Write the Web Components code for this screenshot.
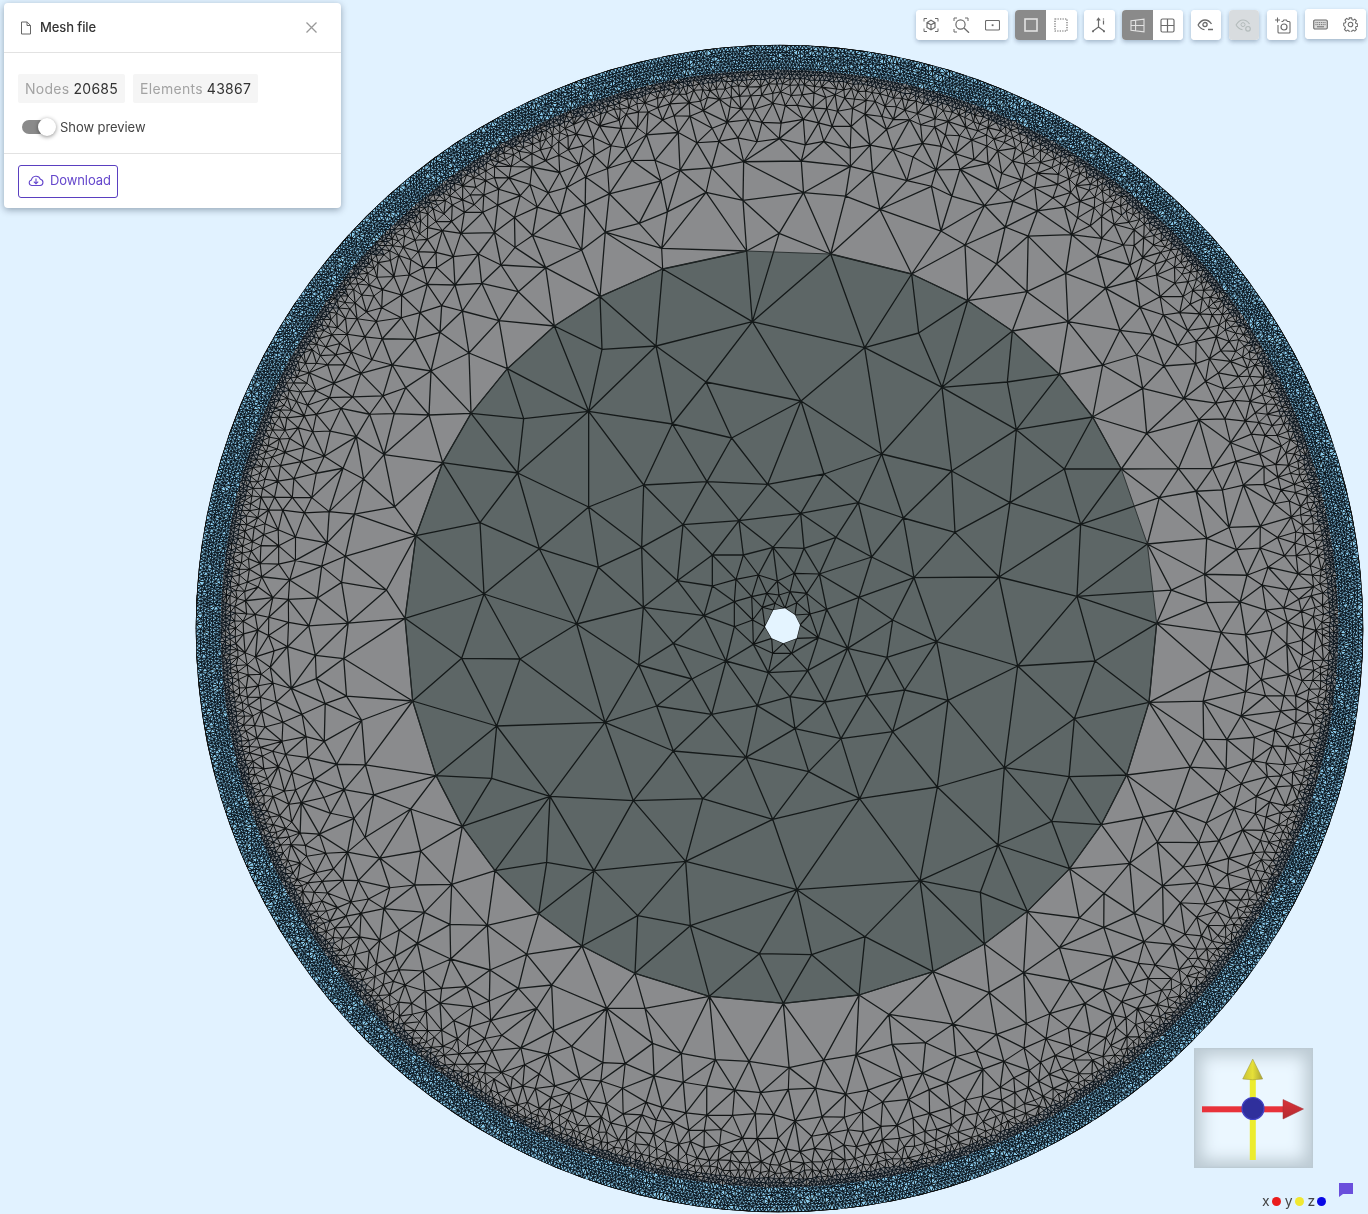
<!DOCTYPE html>
<html lang="en"><head><meta charset="utf-8"><title>Mesh file</title>
<style>
html,body{margin:0;padding:0;background:#e1f2ff;font-family:Inter,"Liberation Sans",sans-serif}
app-stage{display:block}
</style></head>
<body>
<app-stage>
  <mesh-view></mesh-view>
  <file-panel slot="over"></file-panel>
  <tool-bar slot="over"></tool-bar>
  <axis-gizmo slot="over"></axis-gizmo>
  <axis-legend slot="over"></axis-legend>
</app-stage>
<script>
const def=(n,html)=>{customElements.define(n,class extends HTMLElement{
  constructor(){super();this.attachShadow({mode:'open'}).innerHTML=typeof html==='function'?html(this):html;}
})};

def('app-stage',`<style>:host{display:block;position:relative;width:1368px;height:1214px;overflow:hidden;background:#e1f2ff}
</style><slot></slot><slot name="over"></slot>`);

/* ---------- mesh ---------- */
const Q=(ox,oy,a)=>a.map(([x,y])=>[ox+x/3,oy+y/3]);
const nearHole=Q(700,550,[[37,15],[130,15],[37,108],[108,88],[175,75],[232,93],[283,70],[358,72],[103,155],[155,140],[200,130],[237,135],[270,125],[320,130],[380,178],[187,172],[225,160],[258,170],[290,158],[330,192],[12,197],[158,210],[103,230],[355,263],[160,283],[443,295],[218,310],[275,310],[78,333],[205,368],[323,362],[270,440],[477,142]]);
const holePoly=Q(700,550,[[220,180],[255,175],[285,195],[300,225],[290,265],[250,280],[215,265],[195,230]]);
const boundary=[
 ...Q(400,245,[[1040,18],[788,72],[600,155],[463,243],[322,371],[213,505],[128,653],[48,872],[15,1120]]),
 ...Q(780,245,[[152,27],[395,87],[563,167],[697,258],[838,388],[938,516],[1024,672],[1102,897],[1130,1135]]),
 ...Q(400,625,[[38,228],[108,452],[187,604],[285,737],[416,866],[546,963],[705,1045],[928,1114],[1150,1135]]),
 ...Q(780,625,[[1107,232],[1040,450],[964,599],[869,731],[742,859],[613,957],[459,1040],[237,1110]])
];
const inner=[
 ...Q(400,245,[[1057,230],[768,303],[606,313],[918,411],[566,499],[371,521],[817,537],[995,579],[353,684],[731,720],[921,710],[1103,718],[566,786],[240,833],[849,839],[1017,827],[418,911],[725,907],[1119,907],[595,967],[937,929],[1032,931],[832,1007],[937,1025],[1010,1000],[1075,990],[252,1047],[730,1087],[913,1111],[530,1137],[1003,1070],[1055,1055],[1100,1045],[1133,1008],[1057,1123],[1003,1145]]),
 ...Q(780,245,[[254,308],[416,264],[486,427],[682,411],[63,468],[709,554],[305,627],[515,678],[853,672],[132,687],[690,773],[235,773],[62,805],[370,819],[902,838],[525,862],[168,877],[72,910],[275,936],[402,998],[657,996],[44,984],[117,987],[891,1054],[238,1058],[30,1043],[80,1050],[142,1093],[92,1108],[338,1125]]),
 ...Q(400,625,[[185,100],[360,102],[530,0],[716,120],[820,55],[978,107],[876,162],[1062,58],[1105,145],[1072,242],[770,243],[935,268],[615,292],[290,303],[820,378],[1038,397],[275,460],[450,514],[700,527],[908,521],[1118,583],[440,712],[582,737],[857,709],[713,872],[871,902],[1078,986]]),
 ...Q(780,625,[[115,38],[203,72],[321,97],[470,50],[713,123],[945,108],[38,85],[84,137],[374,195],[260,211],[135,231],[33,212],[504,226],[883,281],[45,311],[338,320],[183,341],[673,428],[867,455],[86,440],[472,486],[239,521],[815,589],[654,660],[601,802],[420,767],[51,794],[255,935],[95,989]])
];
const outerNear=[
 ...Q(400,245,[[437,68],[303,60],[235,27],[160,35],[108,22],[55,20],[245,115],[165,120],[82,118],[355,140],[187,198],[125,182],[60,203],[297,227],[120,262],[45,283],[207,324],[93,378],[17,428],[87,510],[5,150],[28,90],[70,68],[110,68],[545,15],[785,10]]),
 ...Q(780,245,[[555,0],[650,57],[857,85],[741,140],[952,33],[977,130],[1068,105],[1088,38],[1130,90],[864,230],[1020,256],[1080,187],[1117,268],[968,360],[1070,330],[1088,430],[1100,565],[1140,155],[1150,210],[1050,60],[1030,0]]),
 ...Q(400,625,[[32,552],[62,678],[155,778],[44,780],[73,862],[150,898],[262,901],[52,955],[152,1002],[380,988],[270,1035],[70,1038],[455,1080],[355,1090],[200,1085],[125,1090],[15,1080],[268,1128],[35,1135],[410,1150],[75,1098],[620,1150],[735,1150]]),
 ...Q(780,625,[[1090,576],[1049,715],[972,805],[1063,865],[898,879],[838,968],[1000,995],[1092,950],[1150,900],[731,1043],[870,1068],[628,1103],[970,1095],[1050,1075],[1105,1060],[1125,1020],[1075,1015],[915,1135],[1025,1130],[1095,1110],[1145,1095]])
];
const CX=779.5,CY=628.5,R=583.8,TAU=Math.PI*2;
const table=[[376,50],[410,42],[450,31],[480,24],[510,17],[530,12],[545,7],[552,4],[556,3.6],[585,3.6]];
const H=r=>{for(let i=1;i<table.length;i++){if(r<=table[i][0]){const a=table[i-1],b=table[i];return a[1]+(b[1]-a[1])*(r-a[0])/(b[0]-a[0]);}}return 3.6};
function buildMesh(){
  let s=1234567;const rnd=()=>{s|=0;s=s+0x6D2B79F5|0;let t=Math.imul(s^s>>>15,1|s);t=t+Math.imul(t^t>>>7,61|t)^t;return((t^t>>>14)>>>0)/4294967296};
  const pts=[],grid=new Map(),CS=64;
  const key=(x,y)=>Math.floor(x/CS)*100000+Math.floor(y/CS);
  const near=(x,y,d)=>{const gx=Math.floor(x/CS),gy=Math.floor(y/CS);
    for(let i=gx-1;i<=gx+1;i++)for(let j=gy-1;j<=gy+1;j++){const c=grid.get(i*100000+j);if(!c)continue;
      for(const p of c){const dx=p[0]-x,dy=p[1]-y;if(dx*dx+dy*dy<d*d)return true}}return false};
  const add=(x,y)=>{const p=[x,y];pts.push(p);const k=key(x,y);(grid.get(k)||grid.set(k,[]).get(k)).push(p)};
  holePoly.forEach(p=>add(p[0],p[1]));
  nearHole.forEach(p=>{if(!near(p[0],p[1],6))add(p[0],p[1])});
  boundary.forEach(p=>{if(!near(p[0],p[1],6))add(p[0],p[1])});
  inner.forEach(p=>{if(!near(p[0],p[1],6))add(p[0],p[1])});
  outerNear.forEach(p=>{if(!near(p[0],p[1],5))add(p[0],p[1])});
  let r=396;
  while(r<R-2.5){const h=H(r),n=Math.round(TAU*r/h),ph=rnd()*7;
    for(let i=0;i<n;i++){const a=ph+i/n*TAU;const j=r>556?0.3:0.42;
      const rr=r+(rnd()-.5)*h*j,aa=a+(rnd()-.5)*h*j/r;
      const x=CX+rr*Math.cos(aa),y=CY+rr*Math.sin(aa);
      if(rr<R-1.5&&!near(x,y,h*.74))add(x,y)}
    r+=h*.86}
  for(let i=0,n=1000;i<n;i++){const a=(i+(rnd()-.5)*.5)/n*TAU,rr=R-rnd()*.6;add(CX+rr*Math.cos(a),CY+rr*Math.sin(a))}
  return pts;
}
function delaunay(P){
  const n=P.length;const pts=P.concat([[-1e5,-1e5],[3e5,-1e5],[600,3e5]]);
  const order=[...Array(n).keys()].sort((a,b)=>P[a][0]-P[b][0]);
  const circ=(a,b,c)=>{const A=pts[a],B=pts[b],C=pts[c];
    const bx=B[0]-A[0],by=B[1]-A[1],cx=C[0]-A[0],cy=C[1]-A[1];
    const d=2*(bx*cy-by*cx)||1e-9,bb=bx*bx+by*by,cc=cx*cx+cy*cy;
    const ux=(cy*bb-by*cc)/d,uy=(bx*cc-cx*bb)/d;
    return{a,b,c,x:A[0]+ux,y:A[1]+uy,r:ux*ux+uy*uy}};
  let open=[circ(n,n+1,n+2)];const closed=[];const M=n+4;
  for(const i of order){const px=pts[i][0],py=pts[i][1];const edges=new Map();const keep=[];
    for(const t of open){const dx=px-t.x;
      if(dx>0&&dx*dx>t.r){closed.push(t);continue}
      const dy=py-t.y;
      if(dx*dx+dy*dy>t.r){keep.push(t);continue}
      for(const[u,v]of[[t.a,t.b],[t.b,t.c],[t.c,t.a]]){const k=u<v?u*M+v:v*M+u;edges.set(k,edges.has(k)?0:1)}}
    edges.forEach((f,k)=>{if(f){const v=k%M,u=(k-v)/M;keep.push(circ(u,v,i))}});
    open=keep}
  return closed.concat(open).filter(t=>t.a<n&&t.b<n&&t.c<n);
}
function inPoly(x,y,poly){let c=false;for(let i=0,j=poly.length-1;i<poly.length;j=i++){const a=poly[i],b=poly[j];
  if((a[1]>y)!==(b[1]>y)&&x<(b[0]-a[0])*(y-a[1])/(b[1]-a[1])+a[0])c=!c}return c}

customElements.define('mesh-view',class extends HTMLElement{
  constructor(){super();this.attachShadow({mode:'open'}).innerHTML=`<style>:host{display:block;position:absolute;inset:0}canvas{display:block;width:1368px;height:1214px;filter:blur(.3px)}</style><canvas width="1368" height="1214"></canvas>`;}
  connectedCallback(){
    const g=this.shadowRoot.querySelector('canvas').getContext('2d');
    const P=buildMesh(),T=delaunay(P);
    const seen=new Set(),M=P.length+1,E=[[],[],[],[]];
    const rad=p=>Math.hypot(p[0]-CX,p[1]-CY);
    for(const t of T){const x=(P[t.a][0]+P[t.b][0]+P[t.c][0])/3,y=(P[t.a][1]+P[t.b][1]+P[t.c][1])/3;
      if(Math.hypot(x-CX,y-CY)>R)continue;
      if(inPoly(x,y,holePoly))continue;
      for(const[u,v]of[[t.a,t.b],[t.b,t.c],[t.c,t.a]]){const k=u<v?u*M+v:v*M+u;if(seen.has(k))continue;seen.add(k);
        const L=Math.hypot(P[u][0]-P[v][0],P[u][1]-P[v][1]);
        if(L>60&&rad(P[u])>500&&rad(P[v])>500)continue;
        E[L<6?0:L<12?1:L<26?2:3].push(u,v)}}
    g.fillStyle='#e1f2ff';g.fillRect(0,0,1368,1214);
    g.beginPath();g.arc(CX,CY,R,0,TAU);g.fillStyle='#8a8b8d';g.fill();
    g.save();g.beginPath();g.arc(CX,CY,R,0,TAU);g.clip();
    g.beginPath();g.arc(CX,CY,R,0,TAU);g.moveTo(CX+559,CY);g.arc(CX,CY,559,0,TAU,true);g.fillStyle='#8fd0f2';g.fill();
    const dk=[...boundary].sort((a,b)=>Math.atan2(a[1]-627,a[0]-781)-Math.atan2(b[1]-627,b[0]-781));
    g.beginPath();dk.forEach((p,i)=>i?g.lineTo(p[0],p[1]):g.moveTo(p[0],p[1]));g.closePath();g.fillStyle='#5d6666';g.fill();
    [[1.02,'rgba(8,18,26,.95)'],[1.0,'rgba(10,12,12,.96)'],[1.15,'rgba(14,16,16,.96)'],[1.3,'rgba(18,22,22,.96)']].forEach(([w,c],i)=>{
      g.beginPath();const e=E[i];for(let k=0;k<e.length;k+=2){g.moveTo(P[e[k]][0],P[e[k]][1]);g.lineTo(P[e[k+1]][0],P[e[k+1]][1])}
      g.lineWidth=w;g.strokeStyle=c;g.stroke()});
    g.beginPath();dk.forEach((p,i)=>i?g.lineTo(p[0],p[1]):g.moveTo(p[0],p[1]));g.closePath();g.lineWidth=1;g.strokeStyle='rgba(34,40,40,.85)';g.stroke();
    g.restore();
    g.beginPath();holePoly.forEach((p,i)=>i?g.lineTo(p[0],p[1]):g.moveTo(p[0],p[1]));g.closePath();g.fillStyle='#e4f4ff';g.fill();
  }
});

/* ---------- panel ---------- */
def('info-chip',t=>`<style>:host{display:inline-flex;align-items:center;gap:4px;height:29px;padding:0 7px;background:#f5f5f5;border-radius:2px;font:14px Inter,sans-serif;letter-spacing:.28px;color:#333}
span{color:#a3a3a3}</style><span>${t.getAttribute('label')}</span><slot></slot>`);
def('x-toggle',`<style>:host{display:inline-flex;align-items:center;font:13px Inter,sans-serif;letter-spacing:-.07px;color:#444}
.track{position:relative;display:block;width:25px;height:14px;border-radius:7px;background:#8a8a8a;margin:0 13px 0 4px}
.knob{position:absolute;right:-9px;top:-2.5px;width:18px;height:18px;border-radius:50%;background:#fff;box-shadow:0 1px 4px rgba(0,0,0,.45)}
</style><span class="track"><span class="knob"></span></span><slot></slot>`);
def('file-panel',`<style>
:host{display:block;position:absolute;left:4px;top:3px;width:337px;background:#fff;border-radius:4px;box-shadow:0 2px 7px rgba(0,20,40,.35);font-family:Inter,sans-serif;color:#333}
header{display:flex;align-items:center;gap:8px;height:49px;padding:0 23px 0 16px;border-bottom:1px solid #e2e2e2;font-size:13px;font-weight:500;letter-spacing:-.1px}
header b{flex:1;font-weight:500;margin-top:-1px}
.body{height:101px;box-sizing:border-box;padding:21px 14px 0;border-bottom:1px solid #e2e2e2}
.chips{display:flex;gap:8px;margin-bottom:9px}
x-toggle{height:30px}
.foot{padding:11px 14px 10px}
button{display:inline-flex;align-items:center;gap:6px;height:33px;width:100px;box-sizing:border-box;padding:0 0 3px 9px;border:1px solid #5a3fc0;border-radius:3px;background:#fff;color:#6446cc;font:13px Inter,sans-serif;letter-spacing:-.1px;white-space:nowrap}
svg{display:block;flex:none}
</style>
<header>
<svg width="12" height="14" viewBox="0 0 12 14" fill="none" stroke="#666" stroke-width="1"><path d="M1.500 1h5.600L10.500 4.400V13h-9zM7 1v3.500h3.500"/></svg>
<b>Mesh file</b>
<svg width="13" height="13" viewBox="0 0 13 13" stroke="#999" stroke-width="1.3"><path d="M1.500 1.500l10 10M11.500 1.500l-10 10"/></svg>
</header>
<div class="body"><div class="chips"><info-chip label="Nodes">20685</info-chip><info-chip label="Elements">43867</info-chip></div>
<x-toggle>Show preview</x-toggle></div>
<div class="foot"><button>
<svg width="16" height="14" viewBox="0 0 16 14" fill="none" stroke="#6446cc" stroke-width="1.1"><path d="M4 12.500H3.600A2.800 2.800 0 0 1 3.400 7 4.700 4.700 0 0 1 12.400 6.200 3.200 3.200 0 0 1 12.200 12.500H4zM8 5.500v5M5.800 8.600L8 10.800l2.200-2.200"/></svg>
Download</button></div>`);

/* ---------- toolbar ---------- */
def('tool-group',`<style>:host{display:flex;border-radius:4px;background:#fff;box-shadow:0 2px 4px rgba(0,30,60,.28);overflow:hidden}</style><slot></slot>`);
def('tool-btn',`<style>:host{display:flex;align-items:center;justify-content:center;width:30.62px;height:30px;color:#6b6b6b;background:#fff}
:host([active]){background:#8a8a8a;color:#e2e2e2}
:host([disabled]){background:#d8dcdf;color:#b4bcbc}
::slotted(svg){display:block;fill:none;stroke:currentColor;stroke-width:1}
</style><slot></slot>`);
const I=(w,h,b)=>`<svg width="${w}" height="${h}" viewBox="0 0 ${w} ${h}">${b}</svg>`;
const icons={
 fit:I(16,16,'<path d="M1 4.500V1.500h3M12 1.500h3v3M15 11.500v3h-3M4 14.500H1v-3"/><path d="M8 3.300l4 2.200v5L8 12.700l-4-2.200v-5zM4 5.500l4 2.300 4-2.300M8 7.800v4.900" stroke-width="1.2"/>'),
 zoom:I(17,16,'<path d="M1 4V1h3M12 1h3v3M1 12v3h3"/><circle cx="7.500" cy="7.500" r="4.600" stroke-width="1.2"/><path d="M11 11l5 4.800" stroke-width="1.3"/>'),
 rect:I(15,12,'<rect x=".5" y="1.500" width="14" height="9.500" rx="1" stroke-width="1.1"/><rect x="6.700" y="5.300" width="1.800" height="1.800" fill="currentColor" stroke="none"/>'),
 solid:I(14,14,'<rect x="1" y="1" width="12" height="12" stroke-width="1.6"/>'),
 dotted:I(14,14,'<rect x="1" y="1" width="12" height="12" stroke-dasharray="1.300 1.200" stroke-width="1.2"/>'),
 axes:I(17,17,'<path d="M7.500 1.500V10M7.500 10l-5.500 4M7.500 10l5.500 4M5.800 3.500l1.700-2.200 1.700 2.200" stroke-width="1.2"/><circle cx="2" cy="14.300" r="1.100" fill="currentColor" stroke="none"/><circle cx="13" cy="14.300" r="1.100" fill="currentColor" stroke="none"/><path d="M12.500 1.500v.9M12.500 3.600v4" stroke-width="1.2"/>'),
 persp:I(15,15,'<path d="M1 2.800L14 1.200v12.600L1 12.200zM5.600 2.200v10.600M1 7.500h13" stroke-width="1.1"/>'),
 grid:I(15,15,'<rect x="1" y="1" width="13" height="13" rx="1.500" stroke-width="1.2"/><path d="M7.500 1v13M1 7.500h13" stroke-width="1.2"/>'),
 eye:I(17,13,'<path d="M1 6c2-3.300 4.600-5 7-5 2.600 0 4.800 1.400 6.500 4" stroke-width="1.3"/><path d="M1 6c1.800 2.800 4 4.400 6.500 4.600" stroke-width="1.3"/><circle cx="8" cy="5.600" r="2.100" stroke-width="1.3"/><path d="M11 10.400h5" stroke-width="1.5"/>'),
 eyeoff:I(17,13,'<path d="M1 6c2-3.300 4.600-5 7-5 2.600 0 4.800 1.400 6.500 4M1 6c1.800 2.800 4 4.400 6.500 4.600" stroke-width="1.2"/><circle cx="8" cy="5.600" r="2"/><circle cx="13" cy="9.800" r="2.300" stroke-width="1.2"/>'),
 cam:I(17,17,'<path d="M3.500 0.500v5M1 3h5" stroke-width="1.1"/><path d="M7.500 4.500h1.300l1-1.500h2.600l1 1.500H15a1 1 0 0 1 1 1V15a1 1 0 0 1-1 1H5a1 1 0 0 1-1-1V8" stroke-width="1.1"/><circle cx="10" cy="10" r="3" stroke-width="1.2"/>'),
 key:I(15,11,'<rect x=".7" y="1" width="13.600" height="9" rx="1.200" fill="currentColor" fill-opacity=".25" stroke-width="1.1"/><path d="M2.500 3.600h10M2.500 5.600h10" stroke-dasharray="1 .8"/><path d="M4 7.800h7"/>'),
 gear:I(15,15,'<path d="M6.300 1h2.400l.4 1.800 1.200.5 1.600-1 1.700 1.700-1 1.600.5 1.200 1.800.4v2.400l-1.800.4-.5 1.200 1 1.600-1.700 1.700-1.600-1-1.200.5-.4 1.800H6.300l-.4-1.800-1.200-.5-1.600 1-1.700-1.700 1-1.600-.5-1.200L.6 8.800V6.400l1.800-.4.5-1.200-1-1.600 1.700-1.700 1.600 1 1.200-.5z" transform="translate(.1 -.1) scale(.98)" stroke-width="1.05"/><circle cx="7.500" cy="7.500" r="2.300" stroke-width="1.05"/>')
};
const btn=(k,a='')=>`<tool-btn ${a}>${icons[k]}</tool-btn>`;
def('tool-bar',`<style>:host{display:flex;position:absolute;right:2px;top:10px;gap:7.45px;align-items:flex-start}
tool-group:last-child{margin-top:-1px}</style>
<tool-group>${btn('fit')}${btn('zoom')}${btn('rect')}</tool-group>
<tool-group>${btn('solid','active')}${btn('dotted')}</tool-group>
<tool-group>${btn('axes')}</tool-group>
<tool-group>${btn('persp','active')}${btn('grid')}</tool-group>
<tool-group>${btn('eye')}</tool-group>
<tool-group>${btn('eyeoff','disabled')}</tool-group>
<tool-group>${btn('cam')}</tool-group>
<tool-group>${btn('key')}${btn('gear')}</tool-group>`);

/* ---------- gizmo ---------- */
def('axis-gizmo',`<style>:host{display:block;position:absolute;left:1194px;top:1048px;width:119px;height:120px;background:#ebf7ff;box-shadow:inset 0 0 16px 8px #bccad3,inset 0 0 2px 1px #b4c3cc}
svg{position:absolute;left:0;top:0}</style>
<svg width="119" height="120" viewBox="1194 1048 119 120">
<defs><linearGradient id="y" x1="0" x2="1"><stop offset="0" stop-color="#c9c23a"/><stop offset=".5" stop-color="#e6e038"/><stop offset="1" stop-color="#a8a235"/></linearGradient>
<linearGradient id="r" x1="0" x2="0" y1="0" y2="1"><stop offset="0" stop-color="#d8333a"/><stop offset="1" stop-color="#b42a30"/></linearGradient></defs>
<rect x="1249.800" y="1078" width="6" height="82" fill="#ecec2e"/>
<path d="M1252.700 1059l10 20q-10 1.500-20 0z" fill="url(#y)" stroke="#9a9440" stroke-width=".5"/>
<rect x="1202" y="1106.300" width="84" height="6" fill="#e8323a"/>
<path d="M1283 1099.500l20.500 9.500-20.500 10z" fill="url(#r)" stroke="#a03034" stroke-width=".5"/>
<circle cx="1253" cy="1108.500" r="11" fill="#2f2f9c" stroke="#4343c6" stroke-width="1.2"/>
</svg>`);
def('axis-legend',`<style>:host{display:flex;position:absolute;left:1262px;top:1192px;align-items:center;font:14px/17px Inter,sans-serif;color:#444;height:17px}
i{display:block;width:9px;height:9px;border-radius:50%;margin:1px 4px 0 2px}
svg{position:absolute;left:77px;top:-9px}
</style><span>x</span><i style="background:#ea1c1c"></i><span>y</span><i style="background:#f0e832"></i><span>z</span><i style="background:#0808e6"></i>
<svg width="14" height="14" viewBox="0 0 14 14"><path d="M0 0h14v11H4L0 14z" fill="#6a4fdc"/></svg>`);
</script>
</body></html>
